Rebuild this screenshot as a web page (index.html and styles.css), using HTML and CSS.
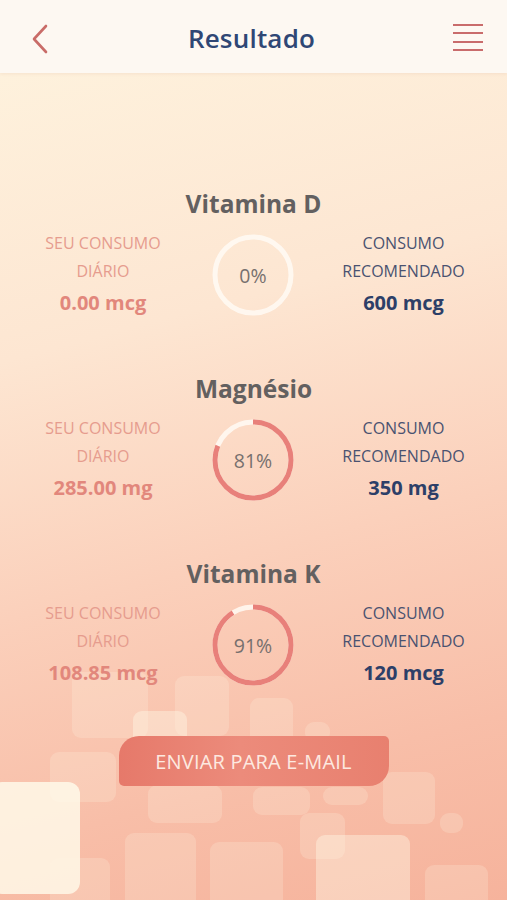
FILE: index.html
```html
<!DOCTYPE html>
<html lang="pt">
<head>
  <meta charset="UTF-8">
  <meta name="viewport" content="width=device-width, initial-scale=1">
  <title>Resultado</title>
  <link rel="stylesheet" href="styles.css">
</head>
<body>
  <div class="screen">
    <div class="squares">
      <span class="sq" style="left:72px;top:672px;width:76px;height:66px"></span>
      <span class="sq light" style="left:133px;top:711px;width:54px;height:62px"></span>
      <span class="sq" style="left:175px;top:676px;width:54px;height:60px"></span>
      <span class="sq" style="left:250px;top:698px;width:43px;height:62px"></span>
      <span class="sq" style="left:305px;top:722px;width:25px;height:20px"></span>
      <span class="sq" style="left:50px;top:752px;width:66px;height:50px"></span>
      <span class="sq light big" style="left:-10px;top:782px;width:90px;height:112px"></span>
      <span class="sq" style="left:148px;top:785px;width:74px;height:38px"></span>
      <span class="sq" style="left:253px;top:787px;width:57px;height:28px"></span>
      <span class="sq" style="left:323px;top:787px;width:45px;height:18px"></span>
      <span class="sq" style="left:383px;top:772px;width:52px;height:52px"></span>
      <span class="sq" style="left:440px;top:813px;width:23px;height:20px"></span>
      <span class="sq" style="left:300px;top:813px;width:45px;height:46px"></span>
      <span class="sq" style="left:125px;top:833px;width:71px;height:80px"></span>
      <span class="sq" style="left:210px;top:842px;width:73px;height:70px"></span>
      <span class="sq light" style="left:316px;top:835px;width:94px;height:80px"></span>
      <span class="sq" style="left:425px;top:865px;width:63px;height:50px"></span>
      <span class="sq" style="left:50px;top:858px;width:60px;height:50px"></span>
    </div>

    <header class="topbar">
      <svg class="back" width="20" height="30" viewBox="0 0 20 30">
        <path d="M16 2 L4 15 L16 28" fill="none" stroke="#c96c68" stroke-width="2.6" stroke-linecap="round" stroke-linejoin="round"/>
      </svg>
      <h1>Resultado</h1>
      <div class="menu">
        <span></span><span></span><span></span><span></span>
      </div>
    </header>

    <main class="content">
      <section class="nutrient">
        <h2>Vitamina D</h2>
        <div class="row">
          <div class="side mine">
            <p class="label">SEU CONSUMO<br>DIÁRIO</p>
            <p class="value">0.00 mcg</p>
          </div>
          <div class="ring">
            <svg width="82" height="82" viewBox="0 0 82 82">
              <circle cx="41" cy="41" r="38" class="track"/>
            </svg>
            <span>0%</span>
          </div>
          <div class="side goal">
            <p class="label">CONSUMO<br>RECOMENDADO</p>
            <p class="value">600 mcg</p>
          </div>
        </div>
      </section>

      <section class="nutrient">
        <h2>Magnésio</h2>
        <div class="row">
          <div class="side mine">
            <p class="label">SEU CONSUMO<br>DIÁRIO</p>
            <p class="value">285.00 mg</p>
          </div>
          <div class="ring">
            <svg width="82" height="82" viewBox="0 0 82 82">
              <circle cx="41" cy="41" r="38" class="track"/>
              <circle cx="41" cy="41" r="38" class="arc" stroke-dasharray="193.4 238.8"/>
            </svg>
            <span>81%</span>
          </div>
          <div class="side goal">
            <p class="label">CONSUMO<br>RECOMENDADO</p>
            <p class="value">350 mg</p>
          </div>
        </div>
      </section>

      <section class="nutrient">
        <h2>Vitamina K</h2>
        <div class="row">
          <div class="side mine">
            <p class="label">SEU CONSUMO<br>DIÁRIO</p>
            <p class="value">108.85 mcg</p>
          </div>
          <div class="ring">
            <svg width="82" height="82" viewBox="0 0 82 82">
              <circle cx="41" cy="41" r="38" class="track"/>
              <circle cx="41" cy="41" r="38" class="arc" stroke-dasharray="217.3 238.8"/>
            </svg>
            <span>91%</span>
          </div>
          <div class="side goal">
            <p class="label">CONSUMO<br>RECOMENDADO</p>
            <p class="value">120 mcg</p>
          </div>
        </div>
      </section>

      <button class="send">ENVIAR PARA E-MAIL</button>
    </main>
  </div>
</body>
</html>
```

FILE: styles.css
```css
body {
  margin: 0;
  font-family: "Open Sans", "Noto Sans", Arial, sans-serif;
}
.screen {
  position: relative;
  width: 507px;
  height: 900px;
  overflow: hidden;
  background: linear-gradient(165deg, #fef4df 0%, #fde6d2 35%, #fbd0bb 60%, #f8bea8 82%, #f6b39c 100%);
}
.squares .sq {
  position: absolute;
  border-radius: 9px;
  background: rgba(255, 246, 228, 0.22);
}
.squares .sq.light {
  background: rgba(255, 250, 232, 0.4);
}
.squares .sq.big {
  background: rgba(255, 252, 236, 0.8);
  border-radius: 12px;
}
.topbar {
  position: relative;
  height: 73px;
  background: #fdf8f2;
  box-shadow: 0 1px 3px rgba(200, 150, 120, 0.15);
  display: flex;
  align-items: center;
  justify-content: space-between;
  padding: 0 24px 0 30px;
}
.topbar h1 {
  margin: 0 0 -2px;
  font-size: 26px;
  font-weight: 600;
  color: #2f4775;
  letter-spacing: 0.2px;
}
.back {
  margin-top: 4px;
}
.menu {
  width: 30px;
  display: flex;
  flex-direction: column;
  gap: 6.5px;
  margin-top: 2px;
}
.menu span {
  display: block;
  height: 2px;
  background: #c96c6c;
}
.content {
  position: relative;
  padding-top: 116px;
  display: flex;
  flex-direction: column;
  align-items: center;
}
.nutrient {
  width: 100%;
  margin-bottom: 57px;
}
.nutrient h2 {
  margin: 0;
  text-align: center;
  font-size: 24.5px;
  line-height: 30px;
  font-weight: 700;
  color: #636060;
}
.row {
  margin-top: 10px;
  display: grid;
  grid-template-columns: 206px 94px 1fr;
  align-items: start;
}
.side {
  text-align: center;
}
.side p {
  margin: 0;
}
.label {
  font-size: 16px;
  line-height: 28px;
}
.value {
  margin-top: 4px !important;
  font-size: 20px;
  line-height: 28px;
  font-weight: 700;
}
.mine .label {
  color: #e69c8e;
}
.mine .value {
  color: #e2877c;
}
.goal .label {
  color: #4a5270;
}
.goal .value {
  color: #2d3f68;
}
.ring {
  position: relative;
  width: 82px;
  height: 82px;
  margin: 5px auto 0;
}
.ring svg {
  display: block;
  transform: rotate(-90deg);
}
.ring circle {
  fill: none;
  stroke-width: 5;
}
.ring .track {
  stroke: rgba(255, 250, 244, 0.85);
}
.ring .arc {
  stroke: #e8807a;
}
.ring span {
  position: absolute;
  inset: 0;
  display: flex;
  align-items: center;
  justify-content: center;
  font-size: 19.5px;
  color: #77706e;
}
.send {
  margin-top: -8px;
  width: 270px;
  height: 50px;
  border: none;
  border-radius: 20px 5px 20px 5px;
  background: linear-gradient(90deg, #e6796a 0%, #ec8b7b 45%, #e8806f 100%);
  color: #fde9e0;
  font-family: "Open Sans", "Noto Sans", Arial, sans-serif;
  font-size: 20px;
  letter-spacing: 0.2px;
  cursor: pointer;
}
```
